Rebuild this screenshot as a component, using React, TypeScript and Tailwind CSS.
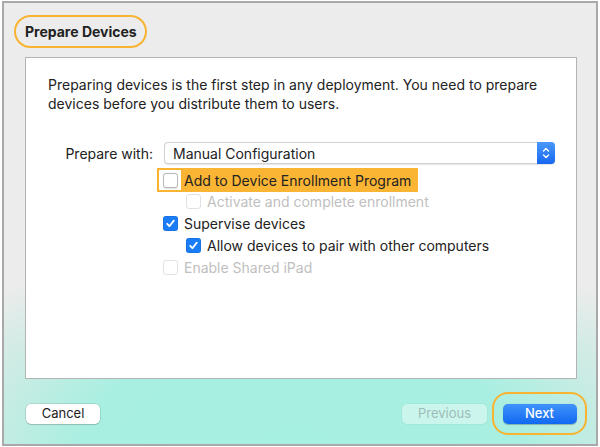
import React from 'react'

const font = { fontFamily: 'Inter, "Liberation Sans", sans-serif' }

function Check({ checked, disabled }: { checked?: boolean; disabled?: boolean }) {
  if (checked) {
    return (
      <span className="flex h-[15px] w-[15px] shrink-0 items-center justify-center rounded-[3px] bg-[#1a7cf6] shadow-[inset_0_0_0_0.5px_rgba(0,0,0,0.15)]">
        <svg width="11" height="11" viewBox="0 0 11 11" fill="none">
          <path d="M2.2 5.8 L4.4 8.2 L8.8 2.6" stroke="white" strokeWidth="1.8" strokeLinecap="round" strokeLinejoin="round" />
        </svg>
      </span>
    )
  }
  return (
    <span
      className={
        'block h-[15px] w-[15px] shrink-0 rounded-[3px] bg-white ' +
        (disabled ? 'border border-[#e2e2e2]' : 'border border-[#b9b9b9] shadow-[0_0.5px_1px_rgba(0,0,0,0.12)]')
      }
    />
  )
}

function Row({ indent, checked, disabled, label, first }: { indent?: boolean; checked?: boolean; disabled?: boolean; label: string; first?: boolean }) {
  return (
    <div className={'flex h-[22px] items-center gap-[6px] ' + (indent ? 'pl-[160px]' : 'pl-[137px]') + (first ? ' -mt-[2px]' : '')}>
      <Check checked={checked} disabled={disabled} />
      <span className={'text-[14px] ' + (disabled ? 'text-[#c0c0c0]' : 'text-[#222]')}>{label}</span>
    </div>
  )
}

export default function App() {
  return (
    <div className="h-[447px] w-[600px] overflow-hidden bg-white" style={font}>
      <div className="ml-[2px] mt-px flex h-[445px] w-[596px] flex-col border-2 border-[#a9a9a9] bg-[#ececec] bg-[radial-gradient(ellipse_72%_48%_at_50%_100%,#a6f0e1_0%,#a8efe1_50%,#cfebe4_78%,#ececec_100%)]">
        <div className="ml-[10px] mt-[12px] flex h-[33px] w-[133px] items-center rounded-full border-2 border-[#f8b431] pl-[9px]">
          <span className="text-[14px] font-bold text-[#222]">Prepare Devices</span>
        </div>

        <div className="ml-[21px] mt-[9px] h-[322px] w-[552px] border border-[#b4b4b4] bg-white">
          <p className="pl-[22px] pr-[20px] pt-[17px] text-[14px] leading-[19px] text-[#222]">
            Preparing devices is the first step in any deployment. You need to prepare devices before you distribute them to users.
          </p>

          <div className="mt-[29px] flex items-center">
            <span className="w-[127px] text-right text-[14px] text-[#222]">Prepare with:</span>
            <div className="ml-[11px] flex h-[22px] w-[391px] items-center rounded-[4px] border border-[#d2d2d2] bg-white shadow-[0_0.5px_1px_rgba(0,0,0,0.1)]">
              <span className="flex-1 pl-[8px] text-[14px] text-[#222]">Manual Configuration</span>
              <span className="-mr-px -my-px flex h-[22px] w-[18px] flex-col items-center justify-center rounded-r-[4px] bg-gradient-to-b from-[#4a98fa] to-[#1768ef]">
                <svg width="10" height="14" viewBox="0 0 10 14" fill="none">
                  <path d="M2.5 5 L5 2.5 L7.5 5" stroke="white" strokeWidth="1.4" strokeLinecap="round" strokeLinejoin="round" />
                  <path d="M2.5 9 L5 11.5 L7.5 9" stroke="white" strokeWidth="1.4" strokeLinecap="round" strokeLinejoin="round" />
                </svg>
              </span>
            </div>
          </div>

          <div className="mt-[4px] flex h-[24px] items-stretch pl-[131px]">
            <span className="flex w-[26px] items-center justify-center border-2 border-[#f8b431]">
              <Check />
            </span>
            <span className="flex items-center bg-[#fbb534] pl-px pr-[7px] text-[14px] text-[#222]">
              Add to Device Enrollment Program
            </span>
          </div>
          <Row first indent disabled label="Activate and complete enrollment" />
          <Row checked label="Supervise devices" />
          <Row indent checked label="Allow devices to pair with other computers" />
          <Row disabled label="Enable Shared iPad" />
        </div>

        <div className="mt-[13px] flex items-center pl-[22px] pr-[9px]">
          <button className="h-[20px] w-[74px] rounded-[5px] bg-white text-[13px] text-[#222] shadow-[0_0_0_0.5px_rgba(0,0,0,0.18),0_1px_1px_rgba(0,0,0,0.12)]">
            Cancel
          </button>
          <div className="flex-1" />
          <button className="h-[20px] w-[85px] rounded-[5px] bg-white/40 text-[13px] text-[#9fbdb6] shadow-[0_0_0_0.5px_rgba(0,0,0,0.06)]">
            Previous
          </button>
          <div className="ml-[5px] flex h-[43px] w-[95px] items-center justify-center rounded-[16px] border-2 border-[#f8b431]">
            <button className="h-[20px] w-[74px] rounded-[5px] bg-gradient-to-b from-[#3f93fa] to-[#0f68f1] text-[13px] font-medium text-white shadow-[0_0.5px_1px_rgba(0,0,0,0.25)]">
              Next
            </button>
          </div>
        </div>
      </div>
    </div>
  )
}
